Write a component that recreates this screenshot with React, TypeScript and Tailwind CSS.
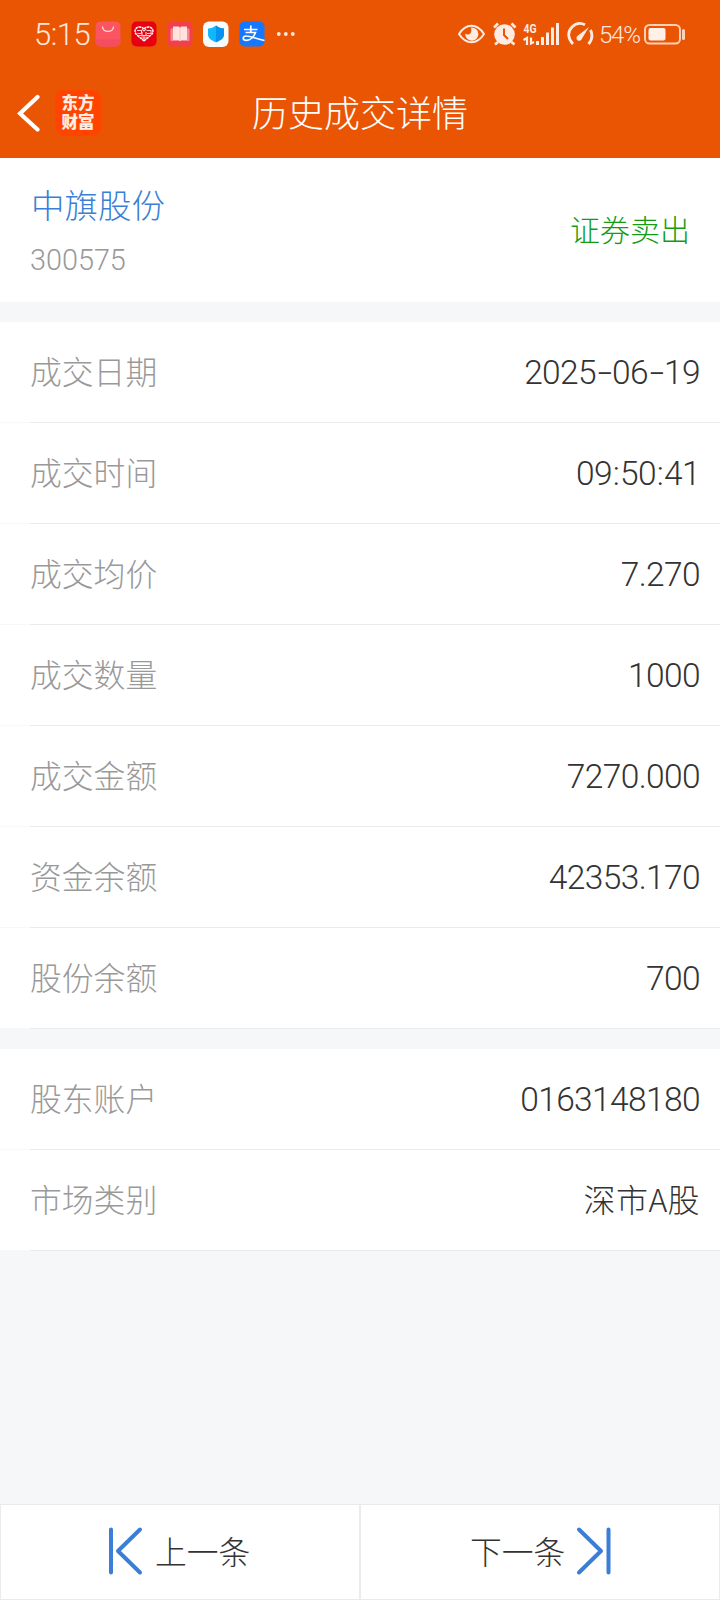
import React from "react";

interface Detail {
  label: string;
  value: string;
  valueClass?: string;
}

const tradeDetails: Detail[] = [
  { label: "成交日期", value: "2025-06-19" },
  { label: "成交时间", value: "09:50:41" },
  { label: "成交均价", value: "7.270" },
  { label: "成交数量", value: "1000" },
  { label: "成交金额", value: "7270.000" },
  { label: "资金余额", value: "42353.170" },
  { label: "股份余额", value: "700" },
];

const accountDetails: Detail[] = [
  { label: "股东账户", value: "0163148180" },
  { label: "市场类别", value: "深市A股", valueClass: "pb-[4px] text-[32px] tracking-[0.4px]" },
];

function AppIcons() {
  return (
    <svg className="ml-[5px] h-[26px] w-[202px] shrink-0" viewBox="0 0 202 26" fill="none">
      <rect x="0.5" y="0.5" width="25" height="25" rx="5" fill="#fa5560" />
      <path d="M0.5 18.5h25v2a5 5 0 0 1-5 5h-15a5 5 0 0 1-5-5z" fill="#f54d60" />
      <path d="M7.5 5.5c0 6.500 11 6.500 11 0" stroke="#ffe0dc" strokeWidth="1.3" />

      <rect x="36.5" y="0.5" width="25" height="25" rx="5" fill="#e60012" />
      <path
        d="M49 20l-7.500-6.500c-3-3-1-7.500 3-7.500 2.500 0 3.500 1 4.500 2 1-1 2-2 4.500-2 4 0 6 4.500 3 7.500z"
        stroke="#fff"
        strokeWidth="1.5"
        strokeDasharray="2.6 0.6"
      />
      <path
        d="M42 9.500h4.500v3h-4M51.500 9.500h4.500v3h-4M47 8l2 2 2-2M43.500 14.500h11M47 11v4.500M51 11v4.500M49 14v5M46 17h6"
        stroke="#fbd0d0"
        strokeWidth="1.1"
      />

      <rect x="72.5" y="0.5" width="25" height="25" rx="5" fill="#f23f4c" />
      <rect x="75.5" y="7.5" width="19" height="12.5" rx="1" fill="#f9888c" />
      <path d="M78 5.500h6l1 1.500 1-1.500h6v13.500h-6l-1 1.500-1-1.500h-6z" fill="#ffe3df" />
      <path d="M85 7v13" stroke="#fbc4c0" strokeWidth="1" />

      <rect x="108" y="0.5" width="25.5" height="25.5" rx="6" fill="#f8fafb" />
      <path
        d="M121 4.500c2.500 2 5 2.800 8 3v6c0 4-4.500 6.500-8 7.800-3.500-1.300-8-3.800-8-7.800v-6c3-.2 5.500-1 8-3z"
        fill="#12b7fa"
      />
      <path d="M121 4.500c2.500 2 5 2.800 8 3v6c0 4-4.500 6.500-8 7.800z" fill="#0792f2" />

      <rect x="144.5" y="0.5" width="25" height="25" rx="5" fill="#1677ff" />
      <path
        d="M149 8.500h13.500M155.800 4.500v7M150.500 11.500h10c-1.500 4-5 7.800-9 7.800-4.500 0-4-4.300-.5-4.300 5 0 10.500 3 18.500 4.500"
        stroke="#fff"
        strokeWidth="1.7"
      />

      <circle cx="183.8" cy="13" r="1.9" fill="#ffe8dc" />
      <circle cx="190.8" cy="13" r="1.9" fill="#ffe8dc" />
      <circle cx="197.8" cy="13" r="1.9" fill="#ffe8dc" />
    </svg>
  );
}

function SystemIcons() {
  return (
    <svg className="h-[26px] w-[136px] shrink-0" viewBox="458 21 136 26" fill="none">
      {/* Eye */}
      <path
        d="M459 34c7-11 18-11 25 0-7 11-18 11-25 0z"
        stroke="#ffece2"
        strokeWidth="2"
        strokeLinejoin="round"
      />
      <path
        d="M471 27.500a6.600 6.600 0 1 1-5.800 6c1.300 1.500 4.500 1.300 5.500-.5 1-1.800.8-3.500.3-5.500z"
        fill="#ffece2"
      />

      {/* Alarm clock */}
      <circle cx="504.5" cy="34.5" r="10.3" fill="#ffece2" />
      <path
        d="M494 27.500l4-4M515.500 27.500l-4-4M498 42l-3 2.500M511.500 42l3 2.500"
        stroke="#ffece2"
        strokeWidth="2.6"
      />
      <path d="M504 28.500v6.500l4 4" stroke="#ea5504" strokeWidth="2" />

      {/* Mobile network */}
      <text
        x="523.5"
        y="33"
        fill="#ffece2"
        fontFamily="Roboto, sans-serif"
        fontSize="13.5"
        fontWeight="700"
        textLength="13"
        lengthAdjust="spacingAndGlyphs"
      >
        4G
      </text>
      <path d="M523.500 40l3.500-2v7M531 37.500v6l3-1.500" stroke="#ffece2" strokeWidth="2.2" />
      <path
        d="M537.500 41v4M542.500 37v8M547.500 32.500v12.500M552.500 27.500v17.500M557.500 23v22"
        stroke="#ffece2"
        strokeWidth="3"
      />

      {/* Gauge */}
      <path
        d="M573 44c-5-5-6-12-1-17 4-4 9-4.300 13-2.200M590.500 30c2.500 5 1.500 10-2 14"
        stroke="#ffece2"
        strokeWidth="2.8"
      />
      <path d="M589 27l-7 11.500a2.800 2.800 0 1 1-4-3z" fill="#ffece2" />
    </svg>
  );
}

function StatusBar() {
  return (
    <div className="flex h-[68px] items-center pl-[34px]">
      <span className="w-[56px] shrink-0 whitespace-nowrap font-['Roboto',sans-serif] text-[31px] font-light leading-none tracking-[-0.5px] text-[#ffe8dc]">
        5:15
      </span>
      <AppIcons />
      <div className="ml-auto flex items-center pr-[34px]">
        <SystemIcons />
        <span className="ml-[5px] w-[42px] whitespace-nowrap pt-px font-['Roboto',sans-serif] text-[24px] font-light leading-none tracking-[-1.2px] text-[#ffe8dc]">
          54%
        </span>
        <svg className="ml-[3px] h-[22px] w-[42px] shrink-0" viewBox="0 0 42 22" fill="none">
          <rect x="1" y="2" width="35" height="18.5" rx="4.5" stroke="#ffd0b8" strokeWidth="2" />
          <rect x="4.5" y="5" width="17" height="12.5" rx="2" fill="#fff1ea" />
          <rect x="38" y="6" width="3" height="11" rx="1.5" fill="#ffd0b8" />
        </svg>
      </div>
    </div>
  );
}

function NavBar() {
  return (
    <div className="grid h-[90px] grid-cols-[1fr_auto_1fr] items-center">
      <div className="flex items-center pl-[17px]">
        <svg className="h-[38px] w-[24px]" viewBox="0 0 24 38" fill="none">
          <path d="M20.500 3L3 19.500l17.500 16" stroke="#fff" strokeWidth="4.2" strokeLinecap="round" />
        </svg>
        <div className="ml-[14px] flex h-[46px] w-[46px] items-center justify-center rounded-[9px] bg-[#ff4400]">
          <span className="w-[34px] break-all pb-[2px] text-center font-['Noto_Sans_CJK_SC',sans-serif] text-[16.5px] font-black leading-[19px] text-[#ffece4]">
            东方财富
          </span>
        </div>
      </div>
      <h1 className="pb-[4px] text-[36px] font-light leading-none text-white">历史成交详情</h1>
      <div />
    </div>
  );
}

// Dashes and colons are set wider than the font's own
function renderValue(value: string) {
  return value.split(/([-:])/).map((part, i) => {
    if (part === "-") {
      return (
        <span key={i} className="inline-block w-[16px] text-center">
          <span className="inline-block scale-x-[1.55]">-</span>
        </span>
      );
    }
    if (part === ":") {
      return (
        <span key={i} className="inline-block w-[8px] text-center">
          :
        </span>
      );
    }
    return part;
  });
}

function DetailRow({ label, value, valueClass }: Detail) {
  return (
    <div className="h-[101px] bg-white">
      <div className="flex h-[100px] items-center justify-between pl-[30px] pr-5">
        <span className="pb-[3px] text-[31.8px] font-light leading-none text-[#999]">{label}</span>
        <span
          className={`font-light leading-none text-[#333] ${
            valueClass ?? "pt-[2px] font-['Roboto',sans-serif] text-[33.5px] tracking-[-0.6px]"
          }`}
        >
          {renderValue(value)}
        </span>
      </div>
      <div className="h-px bg-[#f8f8f8] pl-[30px]">
        <div className="h-px bg-[#ebebeb]" />
      </div>
    </div>
  );
}

export default function App() {
  return (
    <div className="flex h-[1600px] w-[720px] flex-col overflow-hidden bg-[#f6f7f9] font-['Noto_Sans_CJK_SC',sans-serif]">
      <header className="h-[158px] shrink-0 bg-[#ea5504]">
        <StatusBar />
        <NavBar />
      </header>

      <section className="flex h-[144px] shrink-0 items-center justify-between bg-white px-[30px]">
        <div className="pt-[3px]">
          <h2 className="pl-px text-[33.5px] font-light leading-[48px] text-[#3a7fd5]">中旗股份</h2>
          <p className="mt-[8px] font-['Roboto',sans-serif] text-[28.8px] font-light leading-[48px] text-[#999]">
            300575
          </p>
        </div>
        <span className="pb-[5px] text-[30px] font-light leading-none text-[#159c15]">证券卖出</span>
      </section>

      <section className="mt-5 shrink-0">
        {tradeDetails.map((item) => (
          <DetailRow key={item.label} {...item} />
        ))}
      </section>

      <section className="mt-5 shrink-0">
        {accountDetails.map((item) => (
          <DetailRow key={item.label} {...item} />
        ))}
      </section>

      <footer className="mt-auto flex h-[96px] shrink-0 border border-[#ebebeb] bg-white text-[31.8px] font-light leading-none text-[#333]">
        <button className="flex w-[360px] items-center border-r-2 border-[#ebebeb] pb-[2px] pl-[106px]">
          <svg className="h-[50px] w-[36px]" viewBox="0 0 36 50" fill="none">
            <path
              d="M4 3.500v43M33 3.500L11 25l22 21.500"
              stroke="#3a7fd5"
              strokeWidth="4"
              strokeLinecap="round"
              strokeLinejoin="round"
            />
          </svg>
          <span className="ml-3 pb-px">上一条</span>
        </button>
        <button className="flex flex-1 items-center pb-[2px] pl-[109px]">
          <span className="pb-px">下一条</span>
          <svg className="ml-[11px] h-[50px] w-[36px]" viewBox="0 0 36 50" fill="none">
            <path
              d="M32.500 3.500v43M3 3.500L25 25 3 46.500"
              stroke="#3a7fd5"
              strokeWidth="4"
              strokeLinecap="round"
              strokeLinejoin="round"
            />
          </svg>
        </button>
      </footer>
    </div>
  );
}
